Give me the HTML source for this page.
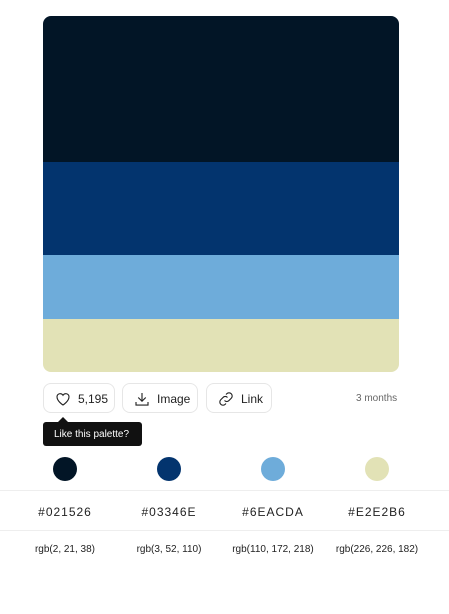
<!DOCTYPE html>
<html><head><style>
body{margin:0;width:449px;height:614px;background:#fff;font-family:"Liberation Sans",sans-serif;position:relative;overflow:hidden}
.pal{position:absolute;left:43px;top:16px;width:356px;height:356px;border-radius:8px;overflow:hidden}
.pal div{width:100%}
.btn{position:absolute;top:383px;height:30px;border:1px solid #e6e6e6;border-radius:8px;font-size:12px;color:#222;display:flex;align-items:center;gap:6px;box-sizing:border-box;padding-left:10px;padding-top:1px}
.ago{position:absolute;left:356px;top:393px;font-size:10px;color:#666}
.tip{position:absolute;left:43px;top:422px;width:99px;height:24px;background:#111;border-radius:3px;color:#fff;font-size:10px;line-height:25px;text-indent:11px}
.tip:before{content:"";position:absolute;left:15px;top:-5px;border:5px solid transparent;border-top:0;border-bottom-color:#111}
.c{position:absolute;top:457px;width:24px;height:24px;border-radius:50%}
.line{position:absolute;left:0;width:449px;height:1px;background:#eee}
.t{position:absolute;width:104px;text-align:center;color:#222}
.hx{top:505px;font-size:12px;letter-spacing:1px}
.rg{top:544px;font-size:10px}
</style></head><body>
<div class="pal">
<div style="height:146px;background:#021526"></div>
<div style="height:93px;background:#03346E"></div>
<div style="height:64px;background:#6EACDA"></div>
<div style="height:53px;background:#E2E2B6"></div>
</div>
<div class="btn" style="left:43px;width:72px"><svg width="18" height="18" viewBox="0 0 24 24" fill="none" stroke="#222" stroke-width="1.5"><path d="M12 20s-8-5-8-11a4.3 4.3 0 0 1 8-2 4.3 4.3 0 0 1 8 2c0 6-8 11-8 11z"/></svg>5,195</div>
<div class="btn" style="left:122px;width:76px"><svg width="18" height="18" viewBox="0 0 24 24" fill="none" stroke="#222" stroke-width="1.5"><path d="M12 4v11M7 10l5 5 5-5M4 16v4h16v-4"/></svg>Image</div>
<div class="btn" style="left:206px;width:66px"><svg width="18" height="18" viewBox="0 0 24 24" fill="none" stroke="#222" stroke-width="1.5"><path d="M10 14a4 4 0 0 0 6 0l3-3a4 4 0 0 0-6-6l-1 1M14 10a4 4 0 0 0-6 0l-3 3a4 4 0 0 0 6 6l1-1"/></svg>Link</div>
<div class="ago">3 months</div>
<div class="tip">Like this palette?</div>
<div class="c" style="left:53px;background:#021526"></div>
<div class="c" style="left:157px;background:#03346E"></div>
<div class="c" style="left:261px;background:#6EACDA"></div>
<div class="c" style="left:365px;background:#E2E2B6"></div>
<div class="line" style="top:490px"></div>
<div class="line" style="top:530px"></div>
<div class="t hx" style="left:13px">#021526</div>
<div class="t hx" style="left:117px">#03346E</div>
<div class="t hx" style="left:221px">#6EACDA</div>
<div class="t hx" style="left:325px">#E2E2B6</div>
<div class="t rg" style="left:13px">rgb(2, 21, 38)</div>
<div class="t rg" style="left:117px">rgb(3, 52, 110)</div>
<div class="t rg" style="left:221px">rgb(110, 172, 218)</div>
<div class="t rg" style="left:325px">rgb(226, 226, 182)</div>
</body></html>
